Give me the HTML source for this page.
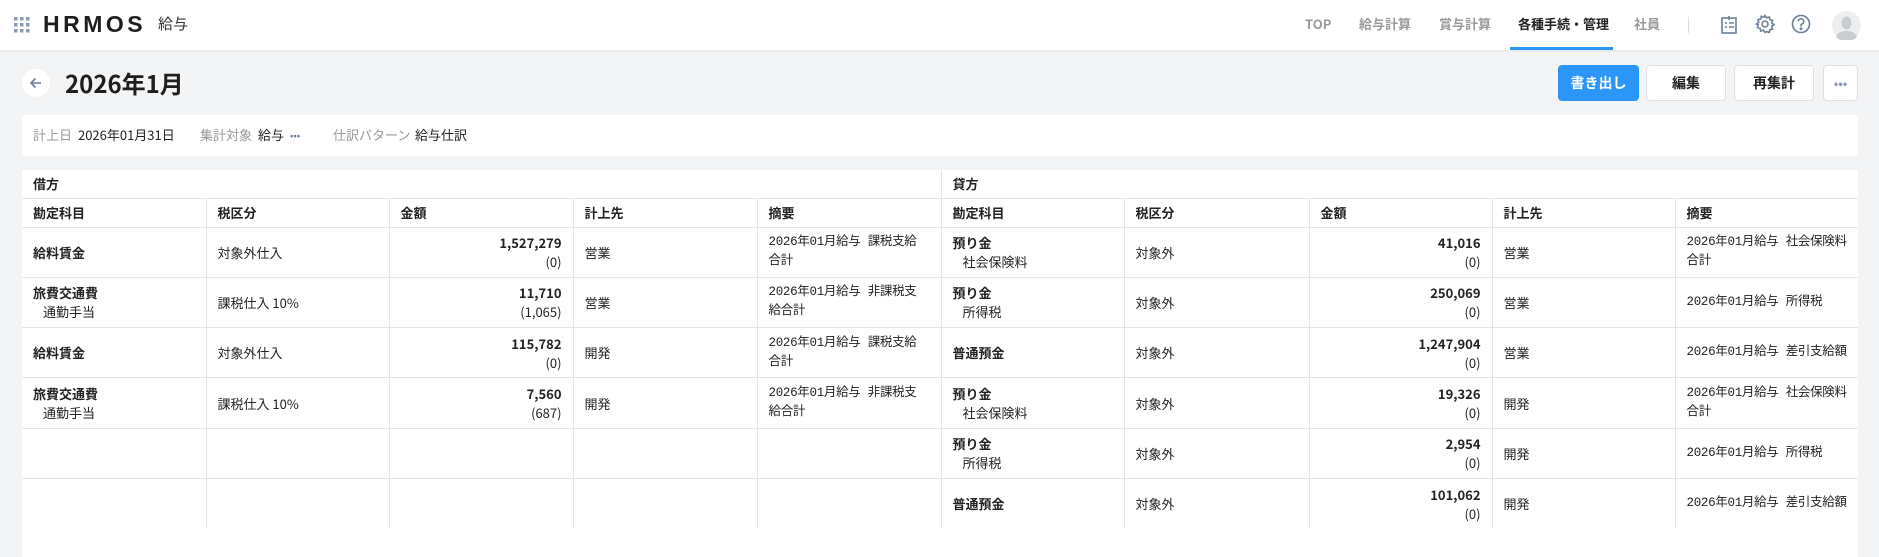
<!DOCTYPE html>
<html><head><meta charset="utf-8"><style>
*{box-sizing:border-box;margin:0;padding:0}
body{width:1879px;height:557px;background:#f3f4f6;font-family:"Noto Sans CJK JP","Liberation Sans",sans-serif;color:#222;position:relative;overflow:hidden;font-size:13px}
.hdr{position:absolute;left:0;top:0;width:1879px;height:50px;background:#fff;box-shadow:0 1px 2px rgba(0,0,0,.08)}
.abs{position:absolute}
.nav{position:absolute;top:14px;font-size:13px;color:#9a9a9a;font-weight:bold;line-height:20px}
.btn{position:absolute;top:65px;height:36px;border:1px solid #dcdfe3;background:#fff;border-radius:4px;font-weight:bold;font-size:14px;display:flex;align-items:center;justify-content:center}
table{position:absolute;left:22px;top:170px;width:1836px;border-collapse:collapse;table-layout:fixed;background:#fff}
td{border-left:1px solid #e3e5e8;border-top:1px solid #e3e5e8;padding:0 11px;vertical-align:middle;line-height:19px;font-size:13px}
tr td:first-child{border-left:none}
tr:first-child td{border-top:none}
.h td{font-weight:bold}
.d td{height:50.3px}
.b{font-weight:bold}
.sub{padding-left:10px}
.r{text-align:right}
.m{font-family:"Liberation Mono","Noto Sans CJK JP",monospace;font-size:12.5px;white-space:nowrap;letter-spacing:-0.3px;padding-right:2px}
.info{position:absolute;top:125px;line-height:20px}
</style></head><body>
<div class="hdr">
 <svg class="abs" style="left:14px;top:17px" width="16" height="16">
  <g fill="#8a9bb0"><rect x="0" y="0" width="3.5" height="3.5"/><rect x="6" y="0" width="3.5" height="3.5"/><rect x="12" y="0" width="3.5" height="3.5"/><rect x="0" y="6" width="3.5" height="3.5"/><rect x="6" y="6" width="3.5" height="3.5"/><rect x="12" y="6" width="3.5" height="3.5"/><rect x="0" y="12" width="3.5" height="3.5"/><rect x="6" y="12" width="3.5" height="3.5"/><rect x="12" y="12" width="3.5" height="3.5"/></g>
 </svg>
 <div class="abs" style="left:43px;top:10px;font-family:'Liberation Sans',sans-serif;font-size:23px;line-height:28px;font-weight:bold;letter-spacing:3.5px;color:#1e1e1e">HRMOS</div>
 <div class="abs" style="left:158px;top:13px;font-size:15px;line-height:22px;color:#333">給与</div>
 <div class="nav" style="left:1305px">TOP</div>
 <div class="nav" style="left:1359px">給与計算</div>
 <div class="nav" style="left:1439px">賞与計算</div>
 <div class="nav" style="left:1518px;color:#222">各種手続・管理</div>
 <div class="abs" style="left:1510px;top:47px;width:103px;height:3px;background:#2b96f7"></div>
 <div class="nav" style="left:1634px">社員</div>
 <div class="abs" style="left:1688px;top:17px;width:1px;height:16px;background:#ddd"></div>
 <svg class="abs" style="left:1720px;top:15px" width="18" height="20" fill="none" stroke="#6b7f99" stroke-width="1.6"><rect x="2" y="3" width="14" height="15"/><path d="M9 1v4M5 8h2M9 8h5M5 12h2M9 12h5"/></svg>
 <svg class="abs" style="left:1755px;top:14px" width="20" height="20" fill="none" stroke="#6b7f99" stroke-width="1.6"><circle cx="10" cy="10" r="3"/><path d="M10 1.5l1.6 2.3 2.7-.8.6 2.7 2.7.7-.8 2.7 2.3 1.6-2.3 1.6.8 2.7-2.7.7-.6 2.7-2.7-.8L10 18.5l-1.6-2.3-2.7.8-.6-2.7-2.7-.7.8-2.7L1.5 10l2.3-1.6-.8-2.7 2.7-.7.6-2.7 2.7.8z"/></svg>
 <svg class="abs" style="left:1791px;top:14px" width="20" height="20" fill="none" stroke="#6b7f99" stroke-width="1.6"><circle cx="10" cy="10" r="8.5"/><path d="M7.3 7.5a2.7 2.7 0 1 1 3.8 2.4c-.8.4-1.1.9-1.1 1.8v.8"/><circle cx="10" cy="14.8" r=".6" fill="#6b7f99"/></svg>
 <svg class="abs" style="left:1832px;top:11px" width="29" height="29"><circle cx="14.5" cy="14.5" r="14.5" fill="#eceef0"/><ellipse cx="14.5" cy="12" rx="5" ry="6.5" fill="#c9ccd1"/><path d="M4 26c2-5 6-6 10.5-6s8.5 1 10.5 6a14.5 14.5 0 0 1-21 0z" fill="#c9ccd1"/></svg>
</div>
<div class="abs" style="left:22px;top:69px;width:28px;height:28px;border-radius:50%;background:#fff"></div>
<svg class="abs" style="left:29px;top:76px" width="14" height="14" fill="none" stroke="#6b7f99" stroke-width="1.6"><path d="M12 7H2M6.5 2.5L2 7l4.5 4.5"/></svg>
<div class="abs" style="left:65px;top:67px;font-size:24px;line-height:32px;font-weight:bold;color:#1e1e1e">2026年1月</div>
<div class="btn" style="left:1558px;width:81px;background:#2b96f7;border-color:#2b96f7;color:#fff">書き出し</div>
<div class="btn" style="left:1646px;width:80px">編集</div>
<div class="btn" style="left:1734px;width:80px">再集計</div>
<div class="btn" style="left:1823px;width:35px;color:#8a9bb0;font-size:12px">•••</div>
<div class="abs" style="left:22px;top:115px;width:1836px;height:41px;background:#fff;border-radius:3px"></div>
<div class="info" style="left:33px;color:#999">計上日</div>
<div class="info" style="left:78px">2026年01月31日</div>
<div class="info" style="left:200px;color:#999">集計対象</div>
<div class="info" style="left:258px">給与</div>
<div class="info" style="left:290px;color:#6b7f99;font-size:10px">•••</div>
<div class="info" style="left:333px;color:#999">仕訳パターン</div>
<div class="info" style="left:415px">給与仕訳</div>
<div class="abs" style="left:22px;top:529px;width:1836px;height:28px;background:#fff"></div>
<table>
<colgroup><col style="width:184px"><col style="width:183px"><col style="width:184px"><col style="width:184px"><col style="width:184px"><col style="width:183px"><col style="width:185px"><col style="width:183px"><col style="width:183px"><col style="width:183px"></colgroup>
<tr class="h" style="height:28px"><td colspan="5">借方</td><td colspan="5">貸方</td></tr>
<tr class="h" style="height:29px"><td>勘定科目</td><td>税区分</td><td>金額</td><td>計上先</td><td>摘要</td><td>勘定科目</td><td>税区分</td><td>金額</td><td>計上先</td><td>摘要</td></tr>
<tr class="d"><td class="b">給料賃金</td><td>対象外仕入</td><td class="r"><b>1,527,279</b><br>(0)</td><td>営業</td><td class="m">2026年01月給与 課税支給<br>合計</td><td><b>預り金</b><br><span class="sub">社会保険料</span></td><td>対象外</td><td class="r"><b>41,016</b><br>(0)</td><td>営業</td><td class="m">2026年01月給与 社会保険料<br>合計</td></tr>
<tr class="d"><td><b>旅費交通費</b><br><span class="sub">通勤手当</span></td><td>課税仕入 10%</td><td class="r"><b>11,710</b><br>(1,065)</td><td>営業</td><td class="m">2026年01月給与 非課税支<br>給合計</td><td><b>預り金</b><br><span class="sub">所得税</span></td><td>対象外</td><td class="r"><b>250,069</b><br>(0)</td><td>営業</td><td class="m">2026年01月給与 所得税</td></tr>
<tr class="d"><td class="b">給料賃金</td><td>対象外仕入</td><td class="r"><b>115,782</b><br>(0)</td><td>開発</td><td class="m">2026年01月給与 課税支給<br>合計</td><td class="b">普通預金</td><td>対象外</td><td class="r"><b>1,247,904</b><br>(0)</td><td>営業</td><td class="m">2026年01月給与 差引支給額</td></tr>
<tr class="d"><td><b>旅費交通費</b><br><span class="sub">通勤手当</span></td><td>課税仕入 10%</td><td class="r"><b>7,560</b><br>(687)</td><td>開発</td><td class="m">2026年01月給与 非課税支<br>給合計</td><td><b>預り金</b><br><span class="sub">社会保険料</span></td><td>対象外</td><td class="r"><b>19,326</b><br>(0)</td><td>開発</td><td class="m">2026年01月給与 社会保険料<br>合計</td></tr>
<tr class="d"><td></td><td></td><td></td><td></td><td></td><td><b>預り金</b><br><span class="sub">所得税</span></td><td>対象外</td><td class="r"><b>2,954</b><br>(0)</td><td>開発</td><td class="m">2026年01月給与 所得税</td></tr>
<tr class="d"><td></td><td></td><td></td><td></td><td></td><td class="b">普通預金</td><td>対象外</td><td class="r"><b>101,062</b><br>(0)</td><td>開発</td><td class="m">2026年01月給与 差引支給額</td></tr>
</table>
</body></html>
